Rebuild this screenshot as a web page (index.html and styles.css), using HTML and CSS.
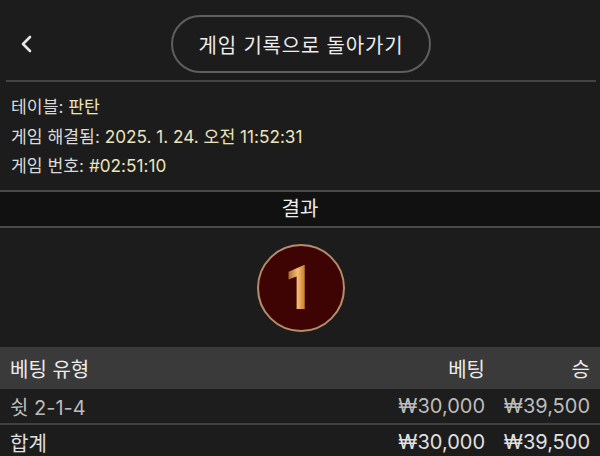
FILE: index.html
```html
<!DOCTYPE html>
<html lang="ko">
<head>
    <meta charset="UTF-8">
    <meta name="viewport" content="width=device-width, initial-scale=1.0">
    <title>게임 기록</title>
    <link rel="stylesheet" href="styles.css">
</head>
<body>
    <div class="header">
        <div class="back">
            <svg width="14" height="18" viewBox="0 0 14 18">
                <polyline points="10,2 3,9 10,16" fill="none" stroke="#e6e6e6" stroke-width="2.6" stroke-linecap="round" stroke-linejoin="round"/>
            </svg>
        </div>
        <button class="pill">게임 기록으로 돌아가기</button>
        <div></div>
    </div>
    <div class="divider"></div>

    <div class="info">
        <p>테이블: <span class="val">판탄</span></p>
        <p>게임 해결됨: <span class="val">2025. 1. 24. 오전 11:52:31</span></p>
        <p>게임 번호: <span class="val">#02:51:10</span></p>
    </div>

    <div class="band">결과</div>

    <div class="result">
        <div class="ball"><span>1</span></div>
    </div>

    <div class="table">
        <div class="row head">
            <div>베팅 유형</div>
            <div class="num">베팅</div>
            <div class="num">승</div>
        </div>
        <div class="row bet">
            <div>쉿 2-1-4</div>
            <div class="num">₩30,000</div>
            <div class="num">₩39,500</div>
        </div>
        <div class="row total">
            <div>합계</div>
            <div class="num">₩30,000</div>
            <div class="num">₩39,500</div>
        </div>
    </div>
</body>
</html>
```

FILE: styles.css
```css
body {
    margin: 0;
    background-color: #1c1c1c;
    color: #e4e4e4;
    font-family: Inter, "Noto Sans CJK KR", sans-serif;
    overflow: hidden;
}
.header {
    display: grid;
    grid-template-columns: 1fr auto 1fr;
    align-items: center;
    padding-top: 15px;
    height: 58px;
}
.back {
    padding-left: 20px;
    display: flex;
    align-items: center;
}
.pill {
    width: 260px;
    height: 58px;
    margin-left: 2px;
    border: 2px solid #5e5e5e;
    border-radius: 29px;
    background: transparent;
    color: #ececec;
    font-family: inherit;
    font-size: 20px;
    letter-spacing: 0.8px;
}
.divider {
    height: 2px;
    margin: 7px 4px 0 6px;
    background-color: #444;
}
.info {
    padding: 10px 0 0 11px;
    height: 98px;
}
.info p {
    margin: 0;
    font-size: 17.2px;
    line-height: 29.5px;
    color: #dadada;
}
.info .val {
    color: #ebe4bd;
}
.band {
    border-top: 2px solid #4a4a4a;
    border-bottom: 2px solid #4a4a4a;
    background-color: #111;
    height: 34px;
    line-height: 34px;
    text-align: center;
    font-size: 20px;
    color: #ececec;
}
.result {
    display: flex;
    justify-content: center;
    padding: 16px 0 15px;
}
.ball {
    width: 84px;
    height: 84px;
    margin-left: 1px;
    border: 2px solid #b48c6a;
    border-radius: 50%;
    background-color: #3e0404;
    display: flex;
    align-items: center;
    justify-content: center;
}
.ball span {
    font-family: Roboto, sans-serif;
    font-weight: 900;
    font-size: 62px;
    line-height: 1;
    margin-left: -4px;
    transform: scaleX(0.8);
    background: linear-gradient(90deg, #8d4a12, #f5bd72 45%, #c57a2a 72%, #8a4612);
    -webkit-background-clip: text;
    background-clip: text;
    color: transparent;
}
.row {
    display: grid;
    grid-template-columns: 1fr 100px 105px;
    padding: 0 10px;
    align-items: center;
    font-size: 20px;
}
.row .num {
    text-align: right;
}
.head {
    height: 42px;
    background-color: #3a3a3a;
    color: #ececec;
}
.bet {
    height: 34px;
    background-color: #1d1d1d;
    color: #bcbcbc;
    border-bottom: 2px solid #404040;
}
.total {
    height: 34px;
    color: #e0e0e0;
}
```
